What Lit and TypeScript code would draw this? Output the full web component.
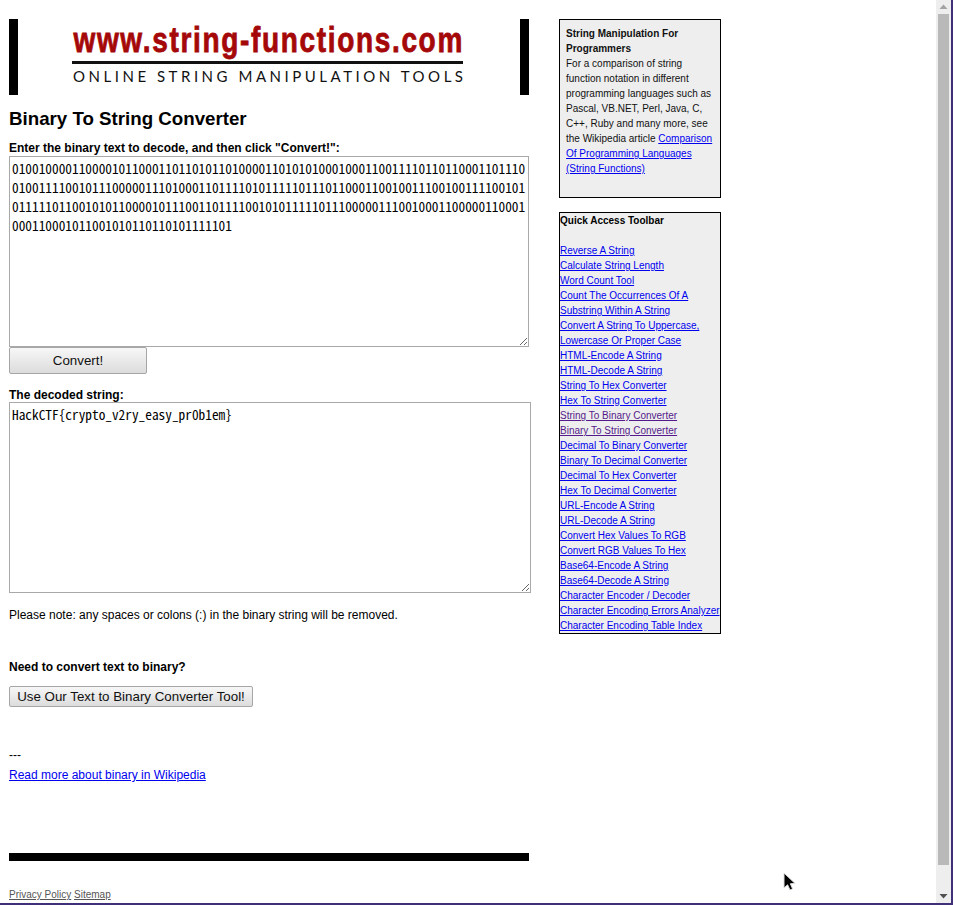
import { LitElement, html, css } from "lit";
import { customElement } from "lit/decorators.js";

const DECODED = "HackCTF{crypto_v2ry_easy_pr0b1em}";
const BINARY = [...DECODED].map((c) => c.charCodeAt(0).toString(2).padStart(8, "0")).join("");

const LINKS: [string, boolean][] = [
  ["Reverse A String", false],
  ["Calculate String Length", false],
  ["Word Count Tool", false],
  ["Count The Occurrences Of A Substring Within A String", false],
  ["Convert A String To Uppercase, Lowercase Or Proper Case", false],
  ["HTML-Encode A String", false],
  ["HTML-Decode A String", false],
  ["String To Hex Converter", false],
  ["Hex To String Converter", false],
  ["String To Binary Converter", true],
  ["Binary To String Converter", true],
  ["Decimal To Binary Converter", false],
  ["Binary To Decimal Converter", false],
  ["Decimal To Hex Converter", false],
  ["Hex To Decimal Converter", false],
  ["URL-Encode A String", false],
  ["URL-Decode A String", false],
  ["Convert Hex Values To RGB", false],
  ["Convert RGB Values To Hex", false],
  ["Base64-Encode A String", false],
  ["Base64-Decode A String", false],
  ["Character Encoder / Decoder", false],
  ["Character Encoding Errors Analyzer", false],
  ["Character Encoding Table Index", false],
];

@customElement("app-root")
export class AppRoot extends LitElement {
  static styles = css`
    :host {
      display: flex;
      position: relative;
      box-sizing: border-box;
      width: 953px;
      height: 905px;
      overflow: hidden;
      border-right: 2px solid #40307a;
      border-bottom: 2px solid #40307a;
      background: #fff;
      color: #000;
      font-family: "Liberation Sans", Arial, sans-serif;
      font-size: 12px;
      line-height: 14px;
    }
    a { color: #00e; }
    a.visited { color: #551a8b; }
    .page {
      flex: 1;
      min-width: 0;
      display: flex;
      align-items: flex-start;
      padding: 19px 0 0 9px;
      gap: 28px;
    }
    .main { width: 522px; flex: none; }
    .logo { display: block; width: 520px; height: 76px; }
    .logo .brand {
      font-family: "Liberation Sans", sans-serif;
      font-weight: 700;
      font-size: 35px;
      fill: #a50808;
      stroke: #a50808;
      stroke-width: 0.8px;
    }
    .logo .tag {
      font-family: Lato, "Liberation Sans", sans-serif;
      font-size: 15px;
      fill: #111;
    }
    h1 {
      margin: 12px 0 10px;
      font-size: 18.72px;
      line-height: 24px;
      font-weight: 700;
    }
    .label { font-weight: 700; display: block; height: 15px; }
    .label.tight { height: 14px; }
    textarea {
      display: block;
      box-sizing: border-box;
      margin: 0;
      padding: 2px;
      height: 191px;
      border: 1px solid #a9a9a9;
      background: #fff;
      color: #000;
      border-radius: 0;
      outline: none;
      font-family: "Noto Sans Mono CJK SC", "Noto Sans Mono", "Liberation Mono", monospace;
      font-size: 13.333px;
      line-height: 19px;
      overflow: hidden;
      word-break: break-all;
    }
    .t1 { width: 520px; }
    .t2 { width: 522px; }
    button {
      display: block;
      box-sizing: border-box;
      margin: 0;
      padding: 0;
      font-family: "Liberation Sans", Arial, sans-serif;
      font-size: 13.333px;
      color: #111;
      border: 1px solid #a6a6a6;
      border-radius: 2px;
      background: linear-gradient(#f7f7f7, #dcdcdc);
    }
    .convert { width: 138px; height: 27px; margin-bottom: 14px; }
    .note { margin: 15px 0 38px; }
    .need { font-weight: 700; }
    .tool { width: 244px; height: 21px; margin-top: 12px; }
    .dashes { margin-top: 41px; }
    .more { margin-top: 6px; }
    .rule { width: 520px; height: 8px; background: #000; margin-top: 71px; }
    .footer {
      margin-top: 28px;
      font-size: 10px;
      line-height: 12px;
    }
    .footer a { color: #555; }
    .side { width: 162px; flex: none; font-size: 10px; line-height: 15px; }
    .box {
      box-sizing: border-box;
      width: 162px;
      border: 1px solid #000;
      background: #eee;
    }
    .b1 { height: 179px; padding: 6px 6px 0 6px; margin-bottom: 14px; color: #111; }
    .b2 { height: 422px; white-space: nowrap; }
    .b2 strong { display: block; margin-bottom: 15px; }
    .b2 .links { display: block; white-space: normal; }
    .b2 .row { display: block; }
    .scrollbar {
      flex: none;
      width: 15px;
      display: flex;
      flex-direction: column;
      align-items: center;
      background: #eee;
    }
    .arrow { flex: none; width: 15px; height: 14px; display: block; }
    .thumb { width: 11px; height: 851px; background: #b9b9b9; flex: none; }
    .track { flex: 1; }
    .cursor {
      position: absolute;
      left: 782px;
      top: 871px;
      width: 14px;
      height: 22px;
    }
  `;

  private rows() {
    const wrapped: Record<string, [string, string]> = {
      "Count The Occurrences Of A Substring Within A String": ["Count The Occurrences Of A", "Substring Within A String"],
      "Convert A String To Uppercase, Lowercase Or Proper Case": ["Convert A String To Uppercase,", "Lowercase Or Proper Case"],
    };
    return LINKS.map(([t, v]) => {
      const w = wrapped[t];
      if (w) {
        return html`<span class="row"><a href="#" class=${v ? "visited" : ""}>${w[0]}</a></span>
          <span class="row"><a href="#" class=${v ? "visited" : ""}>${w[1]}</a></span>`;
      }
      return html`<span class="row"><a href="#" class=${v ? "visited" : ""}>${t}</a></span>`;
    });
  }

  render() {
    return html`
      <div class="page">
        <div class="main">
          <svg class="logo" viewBox="0 0 520 76" role="img" aria-label="www.string-functions.com">
            <rect x="0" y="0" width="9" height="76" fill="#000"></rect>
            <rect x="511" y="0" width="9" height="76" fill="#000"></rect>
            <text class="brand" transform="scale(0.8 1)" x="80.6" y="33" textLength="486" lengthAdjust="spacing">www.string-functions.com</text>
            <rect x="63" y="42" width="391" height="3" fill="#111"></rect>
            <text class="tag" x="64" y="63" textLength="390" lengthAdjust="spacing">ONLINE STRING MANIPULATION TOOLS</text>
          </svg>
          <h1>Binary To String Converter</h1>
          <label class="label">Enter the binary text to decode, and then click "Convert!":</label>
          <textarea class="t1" spellcheck="false" .value=${BINARY}></textarea>
          <button class="convert">Convert!</button>
          <label class="label tight">The decoded string:</label>
          <textarea class="t2" spellcheck="false" .value=${DECODED}></textarea>
          <div class="note">Please note: any spaces or colons (:) in the binary string will be removed.</div>
          <div class="need">Need to convert text to binary?</div>
          <button class="tool">Use Our Text to Binary Converter Tool!</button>
          <div class="dashes">---</div>
          <div class="more"><a href="#">Read more about binary in Wikipedia</a></div>
          <div class="rule"></div>
          <div class="footer"><a href="#">Privacy Policy</a> <a href="#">Sitemap</a></div>
        </div>
        <div class="side">
          <div class="box b1">
            <strong>String Manipulation For Programmers</strong><br />
            For a comparison of string function notation in different programming languages such as Pascal, VB.NET, Perl, Java, C, C++, Ruby and many more, see the Wikipedia article
            <a href="#">Comparison Of Programming Languages (String Functions)</a>
          </div>
          <div class="box b2">
            <strong>Quick Access Toolbar</strong>
            <div class="links">${this.rows()}</div>
          </div>
        </div>
      </div>
      <div class="scrollbar">
        <svg class="arrow" viewBox="0 0 15 14"><path d="M3.5 9 L7.5 4.5 L11.5 9 Z" fill="#a3a3a3"></path></svg>
        <div class="thumb"></div>
        <div class="track"></div>
        <svg class="arrow" viewBox="0 0 15 14"><path d="M3.5 5 L7.5 9.5 L11.5 5 Z" fill="#505050"></path></svg>
      </div>
      <svg class="cursor" viewBox="0 0 14 22">
        <path d="M2 2 L2 17 L5.6 13.8 L8 19 L10.6 17.8 L8.3 12.8 L13 12.4 Z" fill="#000" stroke="#ddd" stroke-width="1"></path>
      </svg>
    `;
  }
}
